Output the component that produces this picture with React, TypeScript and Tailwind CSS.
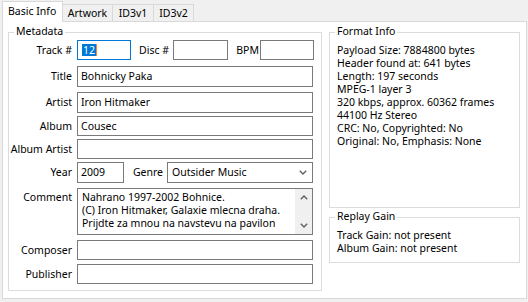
import React from "react"

const Box = ({ children, className = "" }: { children?: React.ReactNode; className?: string }) => (
  <div className={`h-[20px] border border-[#7a7a7a] bg-white pl-[3px] flex items-center whitespace-nowrap overflow-hidden ${className}`}>
    {children}
  </div>
)

const Row = ({ label, children, className = "" }: { label: string; children: React.ReactNode; className?: string }) => (
  <div className={`flex items-center ${className}`}>
    <div className="w-[63px] text-right whitespace-nowrap">{label}</div>
    <div className="ml-[5px] flex items-center">{children}</div>
  </div>
)

const Group = ({ title, className = "", children }: { title: string; className?: string; children: React.ReactNode }) => (
  <div className={`relative border border-[#dcdcdc] ${className}`}>
    <span className="absolute left-[5px] -top-[8px] bg-white px-[2px] leading-[13px]">{title}</span>
    {children}
  </div>
)

const Chevron = ({ up = false }: { up?: boolean }) => (
  <svg width="8" height="5" viewBox="0 0 8 5">
    <path d={up ? "M0.8 4.2 L4 1 L7.2 4.2" : "M0.8 0.8 L4 4 L7.2 0.8"} fill="none" stroke="#606060" strokeWidth="1.4" />
  </svg>
)

const App = () => {
  const format = [
    "Payload Size: 7884800 bytes",
    "Header found at: 641 bytes",
    "Length: 197 seconds",
    "MPEG-1 layer 3",
    "320 kbps, approx. 60362 frames",
    "44100 Hz Stereo",
    "CRC: No, Copyrighted: No",
    "Original: No, Emphasis: None",
  ]

  return (
    <div className="w-[528px] h-[302px] bg-[#f0f0f0] pl-[2px] pt-[1px] text-[10.5px] leading-[13px] text-black font-['Noto_Sans',sans-serif]">
      <div className="flex items-end h-[20px]">
        <div className="relative z-10 -mb-px h-[21px] w-[61px] border border-b-0 border-[#d9d9d9] bg-white pl-[5px] pt-[3px]">Basic Info</div>
        <div className="h-[17px] w-[50px] border-t border-r border-[#d9d9d9] flex items-center justify-center pt-[1px]">Artwork</div>
        <div className="h-[17px] w-[41px] border-t border-r border-[#d9d9d9] flex items-center justify-center pt-[1px]">ID3v1</div>
        <div className="h-[17px] w-[40px] border-t border-r border-[#d9d9d9] flex items-center justify-center pt-[1px]">ID3v2</div>
      </div>

      <div className="w-[525px] h-[278px] border border-[#d9d9d9] bg-white flex pl-[5px] pt-[10px] gap-[7px]">
        <Group title="Metadata" className="w-[314px] h-[259px] pt-[7px]">
          <div className="flex items-center h-[20px]">
            <div className="w-[63px] text-right">Track #</div>
            <div className="ml-[5px] w-[54px] h-[20px] border border-[#0078d7] pl-[4px] flex items-center">
              <span className="inline-block h-[12px] leading-[12px] bg-[#0078d7] text-white px-[1px]">12</span>
              <span className="inline-block w-[1px] h-[12px] bg-[#f7862a]" />
            </div>
            <div className="w-[42px] text-right pr-[4px]">Disc #</div>
            <Box className="w-[55px]" />
            <div className="w-[32px] text-right pr-[1px]">BPM</div>
            <Box className="w-[54px]" />
          </div>

          <Row label="Title" className="mt-[6px]">
            <Box className="w-[236px] h-[21px]">Bohnicky Paka</Box>
          </Row>
          <Row label="Artist" className="mt-[5px]">
            <Box className="w-[236px] h-[21px]">Iron Hitmaker</Box>
          </Row>
          <Row label="Album" className="mt-[3px]">
            <Box className="w-[236px]">Cousec</Box>
          </Row>
          <Row label="Album Artist" className="mt-[3px]">
            <Box className="w-[236px]" />
          </Row>

          <Row label="Year" className="mt-[3px]">
            <Box className="w-[47px] h-[21px]">2009</Box>
            <div className="w-[43px] text-right pr-[4px]">Genre</div>
            <div className="w-[146px] h-[21px] border border-[#7a7a7a] bg-white pl-[4px] pr-[5px] flex items-center justify-between">
              <span>Outsider Music</span>
              <Chevron />
            </div>
          </Row>

          <div className="flex items-start mt-[5px]">
            <div className="w-[63px] text-right pt-[3px]">Comment</div>
            <div className="ml-[5px] w-[236px] h-[47px] border border-[#7a7a7a] bg-white flex">
              <div className="flex-1 pl-[4px] pt-[2px] whitespace-nowrap overflow-hidden">
                <div>Nahrano 1997-2002 Bohnice.</div>
                <div>(C) Iron Hitmaker, Galaxie mlecna draha.</div>
                <div>Prijdte za mnou na navstevu na pavilon</div>
              </div>
              <div className="w-[17px] bg-[#f0f0f0] flex flex-col justify-between">
                <div className="h-[17px] flex items-center justify-center"><Chevron up /></div>
                <div className="h-[17px] flex items-center justify-center"><Chevron /></div>
              </div>
            </div>
          </div>

          <Row label="Composer" className="mt-[5px]">
            <Box className="w-[236px]" />
          </Row>
          <Row label="Publisher" className="mt-[4px]">
            <Box className="w-[236px]" />
          </Row>
        </Group>

        <div className="flex flex-col">
          <Group title="Format Info" className="w-[191px] h-[176px] pl-[7px] pt-[11px]">
            {format.map((line) => (
              <div key={line} className="whitespace-nowrap">{line}</div>
            ))}
          </Group>
          <Group title="Replay Gain" className="w-[191px] h-[46px] mt-[9px] pl-[7px] pt-[11px]">
            <div>Track Gain: not present</div>
            <div>Album Gain: not present</div>
          </Group>
        </div>
      </div>
    </div>
  )
}

export default App
